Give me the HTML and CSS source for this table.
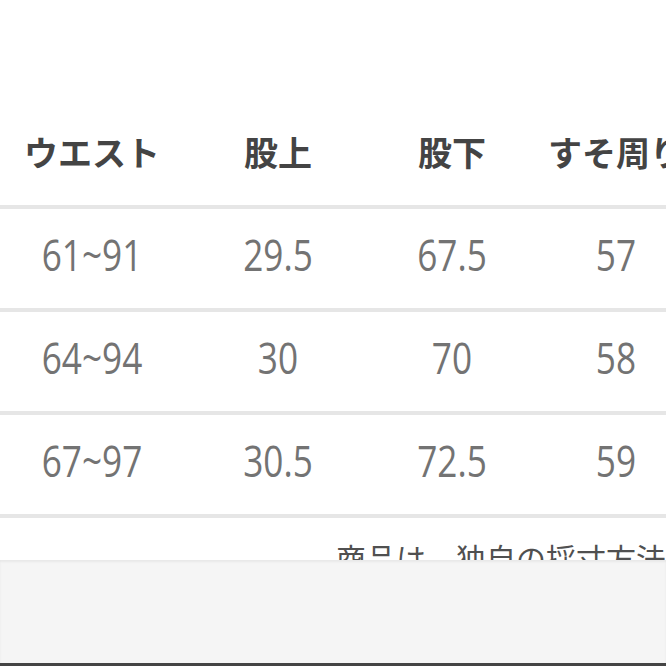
FILE: index.html
```html
<!DOCTYPE html>
<html lang="ja">
<head>
<meta charset="utf-8">
<link rel="stylesheet" href="styles.css">
</head>
<body>
<div class="page">
  <div class="sheet">
    <div class="table">
      <div class="row head">
        <div class="cell">ウエスト</div>
        <div class="cell">股上</div>
        <div class="cell">股下</div>
        <div class="cell">すそ周り</div>
      </div>
      <div class="row">
        <div class="cell num">61~91</div>
        <div class="cell num">29.5</div>
        <div class="cell num">67.5</div>
        <div class="cell num">57</div>
      </div>
      <div class="row">
        <div class="cell num">64~94</div>
        <div class="cell num">30</div>
        <div class="cell num">70</div>
        <div class="cell num">58</div>
      </div>
      <div class="row">
        <div class="cell num">67~97</div>
        <div class="cell num">30.5</div>
        <div class="cell num">72.5</div>
        <div class="cell num">59</div>
      </div>
    </div>
    <p class="note">商品は、独自の採寸方法により採寸しております。</p>
  </div>
  <div class="footer"></div>
</div>
</body>
</html>
```
FILE: styles.css
```css
html, body {
  margin: 0;
  padding: 0;
  background: #ffffff;
}
.page {
  width: 666px;
  height: 666px;
  display: flex;
  flex-direction: column;
  overflow: hidden;
}
.sheet {
  height: 560px;
  flex: none;
  overflow: hidden;
  background: #ffffff;
}
.table {
  display: flex;
  flex-direction: column;
}
.row {
  display: grid;
  grid-template-columns: 184px 188px 160px 168px;
  height: 99px;
  align-items: center;
  border-bottom: 4px solid #e6e6e6;
  white-space: nowrap;
}
.row.head {
  height: 205px;
  align-items: end;
}
.cell {
  text-align: center;
  display: flex;
  justify-content: center;
}
.head .cell {
  font-family: "Noto Sans CJK JP", sans-serif;
  font-weight: 700;
  font-size: 34px;
  color: #444444;
  line-height: 34px;
  padding-bottom: 36px;
}
.num {
  font-family: "Open Sans", "Liberation Sans", sans-serif;
  font-weight: 400;
  font-size: 44px;
  color: #737373;
  line-height: 44px;
  transform: scaleX(0.8);
  margin-top: -10px;
}
.note {
  margin: 24px 0 0 336px;
  font-family: "Noto Sans CJK JP", sans-serif;
  font-size: 30px;
  line-height: 30px;
  color: #505050;
  white-space: nowrap;
}
.footer {
  flex: 1;
  background: #f5f5f5;
  border-bottom: 3px solid #444444;
  box-shadow: inset 0 2px 2px #e8e8e8;
}
```
